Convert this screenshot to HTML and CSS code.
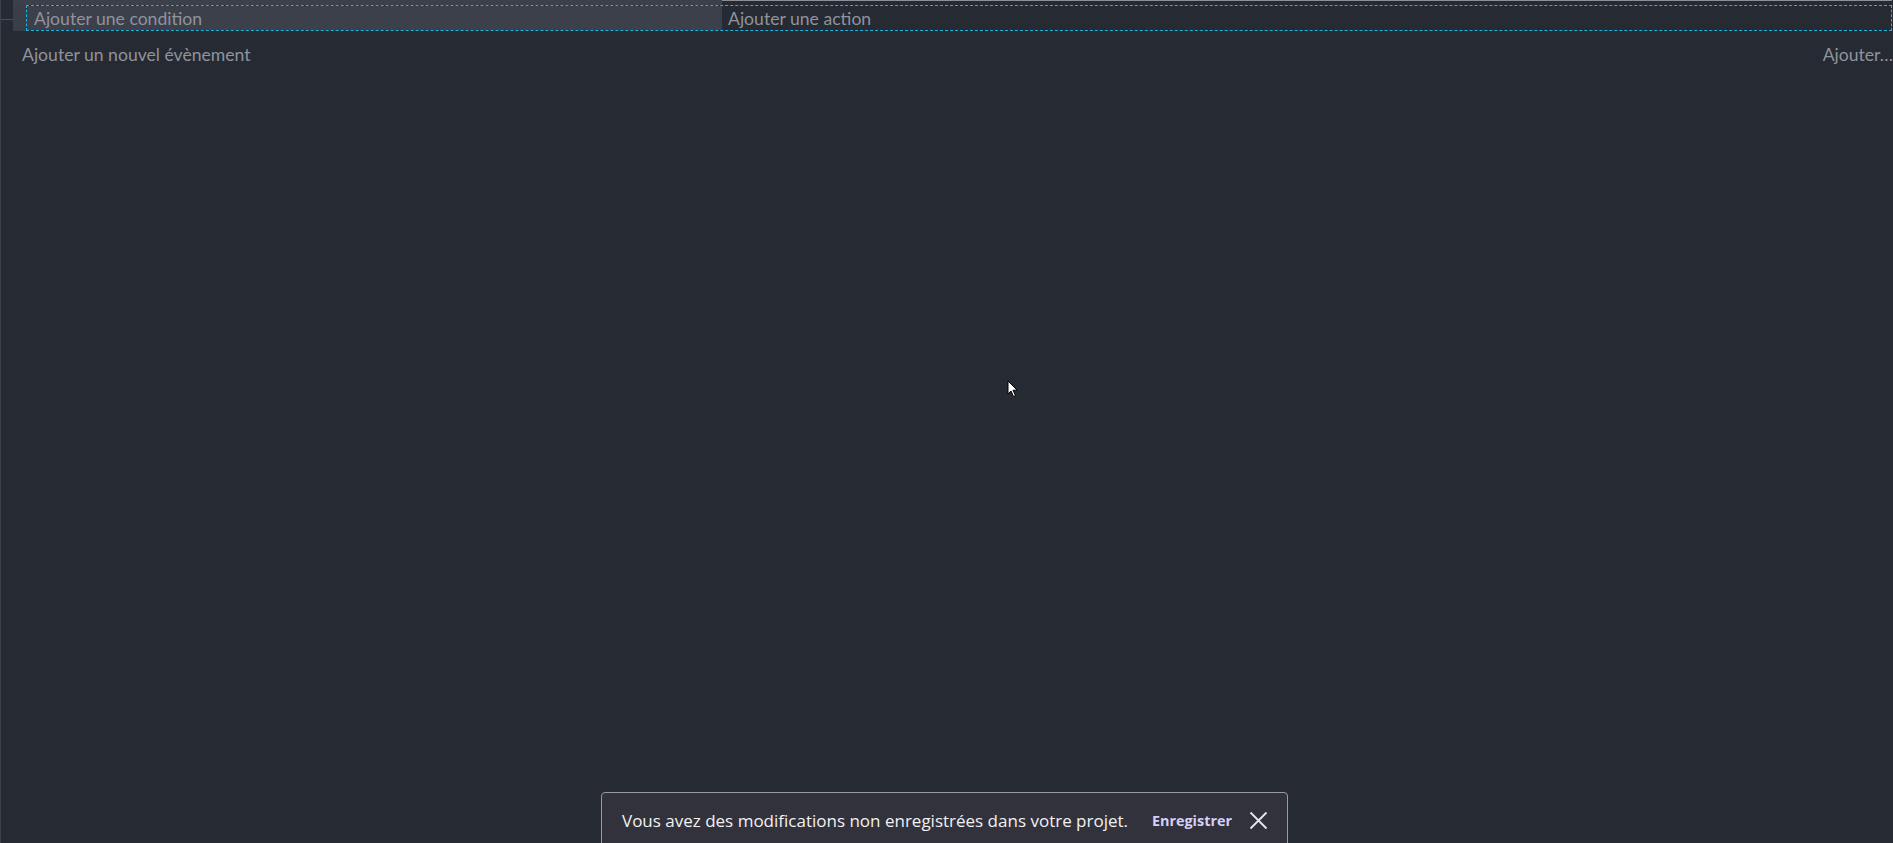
FILE: index.html
```html
<!DOCTYPE html>
<html lang="fr">
<head>
    <meta charset="UTF-8">
    <title>Événements</title>
    <link rel="stylesheet" href="styles.css">
</head>
<body>
    <div class="sheet">
        <div class="prev-row">
            <div class="prev-gutter"></div>
            <div class="prev-conditions"></div>
            <div class="prev-actions"></div>
        </div>
        <div class="event-row">
            <div class="gutter"><span class="tree-line"></span></div>
            <div class="handle"></div>
            <div class="event-body">
                <div class="conditions">Ajouter une condition</div>
                <div class="actions">Ajouter une action</div>
            </div>
        </div>
        <div class="add-row">
            <span class="add-event">Ajouter un nouvel évènement</span>
            <span class="add-other">Ajouter…</span>
        </div>
    </div>

    <svg class="cursor" width="12" height="18" viewBox="0 0 12 18">
        <path d="M1 1 L1 14 L4 11 L6.5 16.5 L8.5 15.6 L6 10.2 L10.2 10.2 Z" fill="#fff" stroke="#000" stroke-width="1"/>
    </svg>

    <div class="snackbar">
        <span class="snack-text">Vous avez des modifications non enregistrées dans votre projet.</span>
        <button class="snack-save">Enregistrer</button>
        <button class="snack-close">
            <svg width="19" height="19" viewBox="0 0 19 19">
                <path d="M1.5 1.5 L17.5 17.5 M17.5 1.5 L1.5 17.5" stroke="#e8e8ea" stroke-width="1.8" fill="none"/>
            </svg>
        </button>
    </div>
</body>
</html>
```

FILE: styles.css
```css
html, body {
    margin: 0;
    height: 100%;
    overflow: hidden;
}
body {
    background: #262a33;
    font-family: "Lato", "Liberation Sans", sans-serif;
    color: #8f939c;
}
.sheet {
    border-left: 1px solid #3d414a;
    height: 100%;
}
.prev-row {
    display: flex;
    height: 5px;
}
.prev-gutter {
    width: 12px;
}
.prev-conditions {
    width: 709px;
    background: #3c404b;
}
.prev-actions {
    flex: 1;
    border-top: 1px solid #8d9097;
    margin-right: 1px;
}
.event-row {
    display: flex;
    height: 26px;
}
.gutter {
    width: 12px;
    position: relative;
}
.tree-line {
    position: absolute;
    left: 0;
    right: 0;
    top: 14px;
    border-top: 1px solid #4a4e58;
}
.handle {
    width: 13px;
    background: #3a3e49;
}
.event-body {
    flex: 1;
    display: flex;
    border: 1px dashed #1db3df;
    margin-right: 1px;
    font-size: 17.6px;
    line-height: 22px;
}
.conditions {
    width: 688px;
    background: #3c404b;
    padding: 2px 0 0 7px;
}
.actions {
    flex: 1;
    padding: 2px 0 0 6px;
}
.add-row {
    display: flex;
    justify-content: space-between;
    font-size: 17.6px;
    padding: 13px 0 0 21px;
}
.add-other {
    white-space: nowrap;
}
.cursor {
    position: absolute;
    left: 1007px;
    top: 380px;
}
.snackbar {
    position: absolute;
    left: 601px;
    top: 792px;
    width: 687px;
    height: 70px;
    box-sizing: border-box;
    background: #31323b;
    border: 1px solid #9a9ba1;
    border-radius: 4px;
    display: flex;
    align-items: flex-start;
    padding: 16px 19px 0 20px;
    font-family: "Open Sans", "Noto Sans", sans-serif;
}
.snack-text {
    color: #f1f1f3;
    font-size: 17px;
    line-height: 24px;
}
.snack-save {
    background: none;
    border: none;
    color: #d7cff8;
    font-family: inherit;
    font-weight: 700;
    font-size: 14.4px;
    line-height: 24px;
    padding: 0;
    margin-left: auto;
}
.snack-close {
    background: none;
    border: none;
    padding: 0;
    margin: 2px 0 0 17px;
    width: 19px;
    height: 19px;
}
```
